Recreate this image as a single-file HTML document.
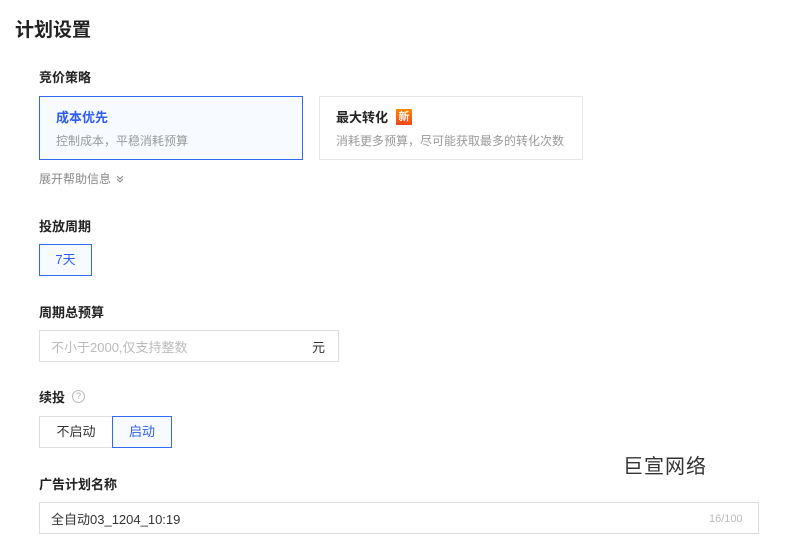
<!DOCTYPE html>
<html><head><meta charset="utf-8"><style>
*{box-sizing:border-box;margin:0;padding:0}
body{width:800px;height:550px;background:#fff;font-family:"Liberation Sans","Noto Sans CJK SC",sans-serif;position:relative;overflow:hidden;color:#222}
.a{position:absolute;white-space:nowrap}
.lbl{font-size:13px;font-weight:bold;color:#222}
.box{position:absolute;border:1px solid #e6e6ea}
</style></head><body>
<div class="a" style="left:15px;top:15px;font-size:19px;font-weight:bold;color:#222">计划设置</div>
<div class="a lbl" style="left:39px;top:67px">竞价策略</div>
<div class="box" style="left:39px;top:96px;width:264px;height:64px;border-color:#2f6bf0;background:#f7fbff"></div>
<div class="a" style="left:56px;top:107px;font-size:13px;font-weight:bold;color:#2f5cf0">成本优先</div>
<div class="a" style="left:56px;top:132px;font-size:12px;color:#999">控制成本，平稳消耗预算</div>
<div class="box" style="left:319px;top:96px;width:264px;height:64px;background:#fff"></div>
<div class="a" style="left:336px;top:107px;font-size:13px;font-weight:bold;color:#222">最大转化</div>
<div class="a" style="left:396px;top:109px;width:16px;height:16px;background:linear-gradient(#ff8a00,#f0451f);color:#fff;font-size:11px;font-weight:bold;line-height:16px;text-align:center">新</div>
<div class="a" style="left:336px;top:132px;font-size:12px;color:#999">消耗更多预算，尽可能获取最多的转化次数</div>
<div class="a" style="left:39px;top:170px;font-size:12px;color:#888">展开帮助信息</div>
<svg class="a" style="left:116px;top:175px" width="8" height="8" viewBox="0 0 8 8"><path d="M1 1l3 3 3-3M1 4l3 3 3-3" fill="none" stroke="#888" stroke-width="1.1"/></svg>
<div class="a lbl" style="left:39px;top:216px">投放周期</div>
<div class="box" style="left:39px;top:244px;width:53px;height:32px;border-color:#2f6bf0;background:#f7fbff;color:#2f5cf0;font-size:13px;text-align:center;line-height:29px">7天</div>
<div class="a lbl" style="left:39px;top:302px">周期总预算</div>
<div class="box" style="left:39px;top:330px;width:300px;height:32px;border-color:#ddd"></div>
<div class="a" style="left:51px;top:337px;font-size:13px;color:#bbb">不小于2000,仅支持整数</div>
<div class="a" style="left:312px;top:337px;font-size:13px;color:#333">元</div>
<div class="a lbl" style="left:39px;top:387px">续投</div>
<div class="a" style="left:72px;top:390px;width:13px;height:13px;border:1px solid #bbb;border-radius:50%;font-size:9px;color:#aaa;text-align:center;line-height:11px">?</div>
<div class="box" style="left:39px;top:416px;width:74px;height:32px;border-color:#ddd;font-size:13px;text-align:center;line-height:29px;color:#333">不启动</div>
<div class="box" style="left:112px;top:416px;width:60px;height:32px;border-color:#2f6bf0;background:#f7fbff;font-size:13px;text-align:center;line-height:29px;color:#2f5cf0">启动</div>
<div class="a" style="left:623px;top:450px;font-size:20px;color:#333;letter-spacing:1px">巨宣网络</div>
<div class="a lbl" style="left:39px;top:474px">广告计划名称</div>
<div class="box" style="left:39px;top:502px;width:720px;height:32px;border-color:#ddd"></div>
<div class="a" style="left:51px;top:509px;font-size:13px;color:#333">全自动03_1204_10:19</div>
<div class="a" style="left:709px;top:513px;font-size:11px;color:#bbb">16/100</div>
</body></html>
